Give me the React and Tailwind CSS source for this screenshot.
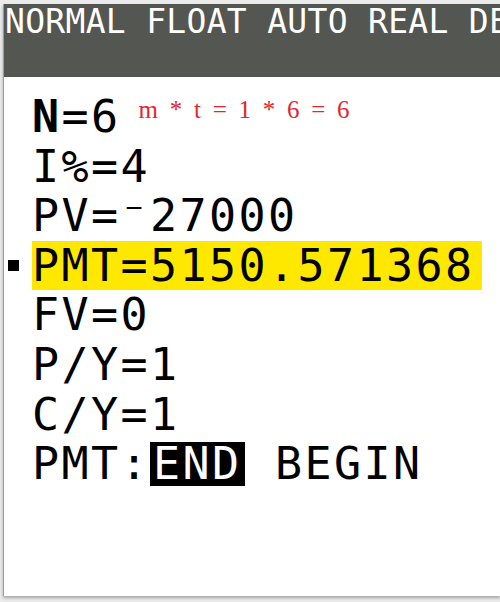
import React from "react";

// TVM solver screen rows (TI-84 style)
const rows = [
  { id: "pv", text: "PV=⁻27000" },
  { id: "pmt", text: "PMT=5150.571368", active: true },
  { id: "fv", text: "FV=0" },
  { id: "py", text: "P/Y=1" },
  { id: "cy", text: "C/Y=1" },
];

const Row = ({ active, children }) => (
  <div className="flex items-center">
    <div className="w-[28px] flex items-center">
      {active && <span className="ml-[4px] w-[11px] h-[11px] bg-black" />}
    </div>
    <div className="whitespace-nowrap">{children}</div>
  </div>
);

export default function App() {
  return (
    <div className="w-[500px] h-[602px] bg-[#ebebeb] pt-[4px] pl-[3px] pb-[6px] overflow-hidden">
      <div className="h-full bg-white border-l border-[#9c9c9c] shadow-[0_2px_3px_rgba(0,0,0,0.3)] flex flex-col font-['DejaVu_Sans_Mono',monospace]">
        <header className="h-[73px] shrink-0 bg-[#545652] text-white text-[33px] leading-[36px] tracking-[0.3px] pl-[1px] whitespace-nowrap overflow-hidden">
          NORMAL FLOAT AUTO REAL DEGREE
        </header>

        <main className="mt-[15px] text-[45px] leading-[49.6px] tracking-[2.4px] text-black">
          <Row>
            <span className="font-bold">N</span>=6
            <span className="ml-[18px] align-[14px] leading-none tracking-normal text-[25px] text-[#e5242b] font-['Liberation_Serif',serif] [word-spacing:5.5px]">
              m * t = 1 * 6 = 6
            </span>
          </Row>
          <Row>I%=4</Row>
          {rows.map((r) => (
            <Row key={r.id} active={r.active}>
              {r.active ? (
                <span className="bg-[#ffe800] pr-[8px] inline-block">{r.text}</span>
              ) : (
                r.text
              )}
            </Row>
          ))}
          <Row>
            PMT:
            <span className="inline-block bg-black text-white leading-[44px] pl-[3px] pr-[4px]">END</span> BEGIN
          </Row>
        </main>
      </div>
    </div>
  );
}
